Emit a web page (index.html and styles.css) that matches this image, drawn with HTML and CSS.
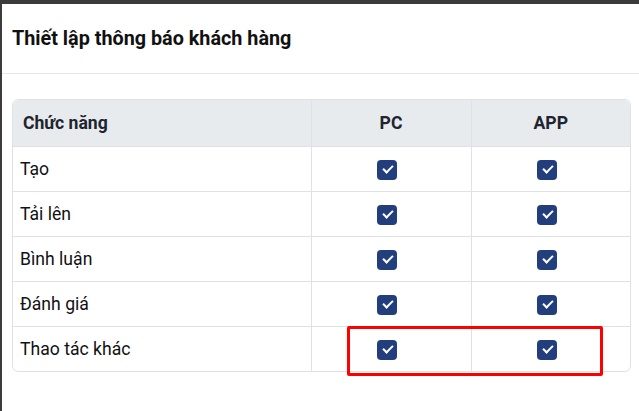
FILE: index.html
```html
<!DOCTYPE html>
<html>
<head>
    <title>Thiết lập thông báo khách hàng</title>
    <link rel="stylesheet" href="styles.css">
</head>
<body>
    <div class="modal">
        <div class="modal-header">Thiết lập thông báo khách hàng</div>
        <div class="modal-body">
            <div class="table-wrap">
                <table class="notify-table">
                    <colgroup>
                        <col class="col-name">
                        <col class="col-check">
                        <col>
                    </colgroup>
                    <thead>
                        <tr>
                            <th class="th-name">Chức năng</th>
                            <th>PC</th>
                            <th>APP</th>
                        </tr>
                    </thead>
                    <tbody>
                        <tr>
                            <td>Tạo</td>
                            <td class="cell-check"><span class="checkbox"></span></td>
                            <td class="cell-check"><span class="checkbox"></span></td>
                        </tr>
                        <tr>
                            <td>Tải lên</td>
                            <td class="cell-check"><span class="checkbox"></span></td>
                            <td class="cell-check"><span class="checkbox"></span></td>
                        </tr>
                        <tr>
                            <td>Bình luận</td>
                            <td class="cell-check"><span class="checkbox"></span></td>
                            <td class="cell-check"><span class="checkbox"></span></td>
                        </tr>
                        <tr>
                            <td>Đánh giá</td>
                            <td class="cell-check"><span class="checkbox"></span></td>
                            <td class="cell-check"><span class="checkbox"></span></td>
                        </tr>
                        <tr>
                            <td>Thao tác khác</td>
                            <td class="cell-check"><span class="checkbox"></span></td>
                            <td class="cell-check"><span class="checkbox"></span></td>
                        </tr>
                    </tbody>
                </table>
                <!-- annotation box around the last row's checkboxes -->
                <div class="highlight"></div>
            </div>
        </div>
    </div>
</body>
</html>
```

FILE: styles.css
```css
body {
    margin: 0;
    background: #3b3b3b;
    height: 411px;
    overflow: hidden;
    font-family: Roboto, "Liberation Sans", Arial, sans-serif;
}
.modal {
    margin: 4px 0 0 2px;
    background: #fff;
    height: 407px;
}
.modal-header {
    padding: 24px 10px;
    line-height: 21px;
    font-size: 19.8px;
    font-weight: 700;
    color: #111;
    border-bottom: 1px solid #e6e6e6;
}
.modal-body {
    padding: 25px 8px 0 10px;
}
.table-wrap {
    position: relative;
    border: 1px solid #dfe1e6;
    border-radius: 6px;
}
.notify-table {
    width: 100%;
    table-layout: fixed;
    border-collapse: collapse;
    font-size: 17.6px;
    color: #111;
}
.col-name {
    width: 298px;
}
.col-check {
    width: 160px;
}
.notify-table th {
    background: #e8ebee;
    height: 46px;
    padding: 0 10px;
    font-weight: 700;
    text-align: center;
    color: #1f2530;
    border-left: 1px solid #dfe1e6;
    border-bottom: 1px solid #dfe1e6;
}
.notify-table th.th-name {
    text-align: left;
    border-left: 0;
    border-top-left-radius: 6px;
}
.notify-table th:last-child {
    border-top-right-radius: 6px;
}
.notify-table td {
    height: 44px;
    padding: 0 7px;
    border-left: 1px solid #dfe1e6;
    border-bottom: 1px solid #dfe1e6;
}
.notify-table td:first-child {
    border-left: 0;
}
.notify-table tbody tr:last-child td {
    border-bottom: 0;
}
.cell-check {
    text-align: center;
}
.checkbox {
    display: inline-block;
    width: 20px;
    height: 20px;
    margin-right: 8px;
    border-radius: 4px;
    background: #233e7c;
    position: relative;
    vertical-align: middle;
}
.checkbox::after {
    content: "";
    position: absolute;
    left: 6px;
    top: 5px;
    width: 8px;
    height: 4px;
    border-left: 2px solid #fff;
    border-bottom: 2px solid #fff;
    transform: rotate(-45deg);
}
.highlight {
    position: absolute;
    left: 334px;
    top: 226px;
    width: 250px;
    height: 44px;
    border: 3px solid #ff0000;
    border-radius: 2px;
}
```
